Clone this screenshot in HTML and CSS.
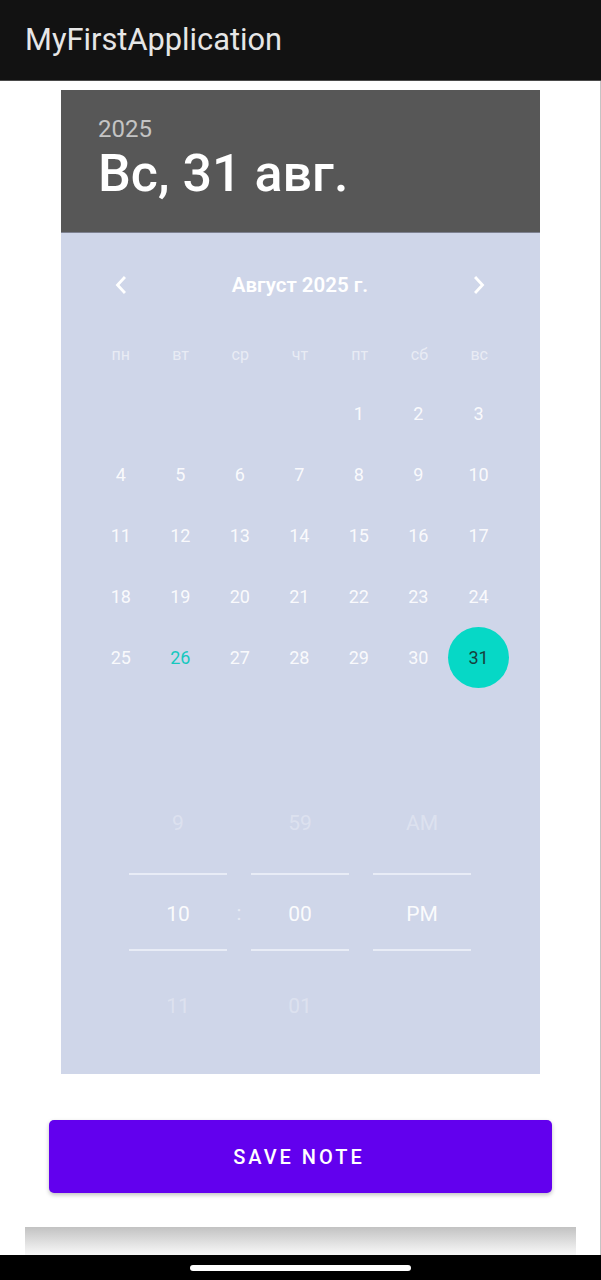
FILE: index.html
```html
<!DOCTYPE html>
<html lang="ru">
<head>
<meta charset="utf-8">
<link rel="stylesheet" href="styles.css">
</head>
<body>
<div class="screen">
  <header class="appbar"><span class="apptitle">MyFirstApplication</span></header>
  <main class="content">
    <section class="picker">
      <div class="pk-head">
        <div class="pk-year">2025</div>
        <div class="pk-date">Вс, 31 авг.</div>
      </div>
      <div class="pk-body">
        <div class="month-row">
          <span class="nav-btn"><svg width="14" height="18" viewBox="0 0 14 18"><polyline points="10,2 3.5,9 10,16" fill="none" stroke="#fff" stroke-width="2.8" stroke-linecap="square"/></svg></span>
          <span class="month-title">Август 2025 г.</span>
          <span class="nav-btn"><svg width="14" height="18" viewBox="0 0 14 18"><polyline points="4,2 10.5,9 4,16" fill="none" stroke="#fff" stroke-width="2.8" stroke-linecap="square"/></svg></span>
        </div>
        <div class="week-row">
          <span>пн</span><span>вт</span><span>ср</span><span>чт</span><span>пт</span><span>сб</span><span>вс</span>
        </div>
        <div class="days">
          <span></span><span></span><span></span><span></span><span>1</span><span>2</span><span>3</span>
          <span>4</span><span>5</span><span>6</span><span>7</span><span>8</span><span>9</span><span>10</span>
          <span>11</span><span>12</span><span>13</span><span>14</span><span>15</span><span>16</span><span>17</span>
          <span>18</span><span>19</span><span>20</span><span>21</span><span>22</span><span>23</span><span>24</span>
          <span>25</span><span class="today">26</span><span>27</span><span>28</span><span>29</span><span>30</span><span class="selected"><i>31</i></span>
        </div>
        <div class="time">
          <div class="tcol">
            <div class="tcell dim">9</div>
            <div class="tcell cur">10</div>
            <div class="tcell dim">11</div>
          </div>
          <div class="tsep">:</div>
          <div class="tcol">
            <div class="tcell dim">59</div>
            <div class="tcell cur">00</div>
            <div class="tcell dim">01</div>
          </div>
          <div class="tsep"></div>
          <div class="tcol">
            <div class="tcell dim">AM</div>
            <div class="tcell cur">PM</div>
            <div class="tcell dim"></div>
          </div>
        </div>
      </div>
    </section>
    <div class="btn-wrap"><button class="save-btn">SAVE NOTE</button></div>
    <div class="card-shadow"></div>
  </main>
  <footer class="navbar"><span class="pill"></span></footer>
</div>
</body>
</html>
```

FILE: styles.css
```css
* { box-sizing: border-box; }
html, body { margin: 0; padding: 0; }
body {
  width: 601px;
  height: 1280px;
  overflow: hidden;
  background: #ffffff;
  font-family: Roboto, "Noto Sans", "Liberation Sans", sans-serif;
}
.screen {
  display: flex;
  flex-direction: column;
  height: 1280px;
}
.appbar {
  height: 81px;
  background: #121212;
  border-bottom: 1px solid #4a4a4a;
  display: flex;
  align-items: center;
  padding-left: 25px;
  padding-bottom: 1px;
}
.apptitle {
  color: #e6e6e6;
  font-size: 30.8px;
  line-height: 40px;
}
.content {
  flex: 1;
  display: flex;
  flex-direction: column;
  border-right: 1px solid #c4c4c4;
  padding-top: 9px;
}
.picker {
  width: 479px;
  margin-left: 61px;
  display: flex;
  flex-direction: column;
}
.pk-head {
  height: 143px;
  background: #575757;
  padding: 24px 37px 0;
  border-bottom: 1px solid #7d8190;
}
.pk-year {
  font-size: 24px;
  line-height: 30px;
  color: #c4c4c4;
}
.pk-date {
  font-size: 52px;
  line-height: 60px;
  color: #ffffff;
  font-weight: 500;
}
.pk-body {
  background: #cfd6e9;
  padding: 24px 31px 31px 30px;
}
.month-row {
  height: 56px;
  display: flex;
  align-items: center;
  justify-content: space-between;
}
.nav-btn {
  width: 60px;
  height: 56px;
  display: flex;
  align-items: center;
  justify-content: center;
}
.month-title {
  color: #ffffff;
  font-size: 20.5px;
  font-weight: 600;
}
.week-row {
  margin-top: 12px;
  height: 58px;
  display: grid;
  grid-template-columns: repeat(7, 1fr);
  align-items: center;
  justify-items: center;
  color: rgba(255, 255, 255, 0.55);
  font-size: 16px;
}
.days {
  display: grid;
  grid-template-columns: repeat(7, 1fr);
  grid-auto-rows: 61px;
  align-items: center;
  justify-items: center;
  color: rgba(255, 255, 255, 0.9);
  font-size: 18px;
}
.days .today { color: #17c8bf; }
.days .selected i {
  font-style: normal;
  width: 61px;
  height: 61px;
  border-radius: 50%;
  background: #06d8c6;
  color: #173f3c;
  display: flex;
  align-items: center;
  justify-content: center;
}
.time {
  margin-top: 94px;
  display: flex;
  justify-content: center;
}
.tcol {
  width: 98px;
  display: flex;
  flex-direction: column;
}
.tsep {
  width: 24px;
  display: flex;
  align-items: center;
  justify-content: center;
  color: rgba(255, 255, 255, 0.5);
  font-size: 20px;
}
.tcell {
  height: 78px;
  display: flex;
  align-items: center;
  justify-content: center;
  font-size: 21px;
  padding-top: 3px;
}
.tcell.dim { color: rgba(255, 255, 255, 0.3); }
.tcell.cur {
  color: rgba(255, 255, 255, 0.92);
  border-top: 2px solid #e8ecf6;
  border-bottom: 2px solid #e8ecf6;
  margin: 13px 0 14px;
}
.btn-wrap {
  padding: 46px 48px 0 49px;
}
.save-btn {
  width: 100%;
  height: 73px;
  border: none;
  border-radius: 5px;
  background: #6200ee;
  color: #ffffff;
  font-family: Roboto, "Noto Sans", sans-serif;
  font-size: 20px;
  font-weight: 500;
  letter-spacing: 3px;
  padding-left: 3px;
  box-shadow: 0 2px 4px rgba(0, 0, 0, 0.25);
}
.card-shadow {
  margin: 34px 24px 0 25px;
  flex: 1;
  background: linear-gradient(#c2c2c2, #eeeeee 80%, #f6f6f6);
}
.navbar {
  height: 25px;
  background: #000000;
  display: flex;
  justify-content: center;
  padding-top: 10px;
}
.pill {
  width: 221px;
  height: 6px;
  border-radius: 3px;
  background: #ffffff;
}
```
